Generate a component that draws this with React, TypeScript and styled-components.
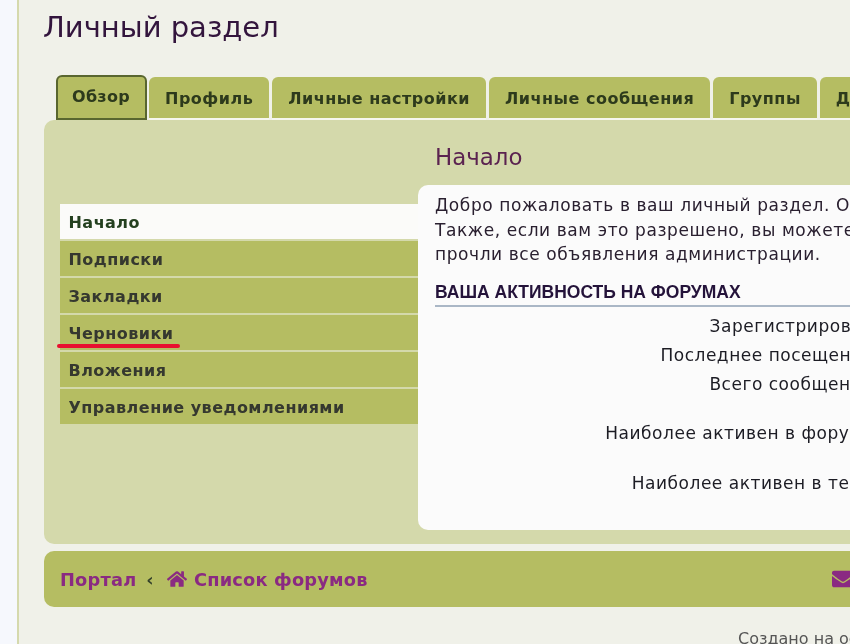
import React from 'react';
import styled, { createGlobalStyle } from 'styled-components';
import { FaHome, FaEnvelope } from 'react-icons/fa';

const tabs = ['Обзор', 'Профиль', 'Личные настройки', 'Личные сообщения', 'Группы', 'Друзья и недруги'];
const menu = ['Начало', 'Подписки', 'Закладки', 'Черновики', 'Вложения', 'Управление уведомлениями'];
const stats = [
  { label: 'Зарегистрирован:' },
  { label: 'Последнее посещение:' },
  { label: 'Всего сообщений:', tall: true },
  { label: 'Наиболее активен в форуме:', tall: true },
  { label: 'Наиболее активен в теме:' },
];

const App: React.FC = () => {
  return (
    <Page>
      <GlobalStyle />
      <Title>Личный раздел</Title>
      <Tabs>
        {tabs.map((tab, i) => (
          <Tab key={tab} $active={i === 0}>
            {tab}
          </Tab>
        ))}
      </Tabs>
      <Panel>
        <Sidebar>
          {menu.map((item, i) => (
            <MenuItem key={item} $active={i === 0}>
              {item}
            </MenuItem>
          ))}
          <RedMark />
        </Sidebar>
        <Main>
          <Heading>Начало</Heading>
          <Content>
            <Intro>
              Добро пожаловать в ваш личный раздел. Отсюда вы можете управлять своими настройками.
              <br />
              Также, если вам это разрешено, вы можете просматривать и изменять свой профиль, а также
              <br />
              прочли все объявления администрации.
            </Intro>
            <SectionTitle>ВАША АКТИВНОСТЬ НА ФОРУМАХ</SectionTitle>
            <Stats>
              {stats.map((row) => (
                <StatRow key={row.label} $tall={row.tall}>
                  {row.label}
                </StatRow>
              ))}
            </Stats>
          </Content>
        </Main>
      </Panel>
      <NavBar>
        <Crumbs>
          <span>Портал</span>
          <Separator>‹</Separator>
          <FaHome size={20} />
          <span>Список форумов</span>
        </Crumbs>
        <NavRight>
          <FaEnvelope size={22} />
          <span>Связаться с администрацией</span>
        </NavRight>
      </NavBar>
      <Footer>Создано на основе phpBB® Forum Software © phpBB Limited</Footer>
    </Page>
  );
};

export default App;

const GlobalStyle = createGlobalStyle`
  html, body {
    margin: 0;
    height: 644px;
    overflow: hidden;
    background: #f6f8fd;
  }
`;

const Page = styled.div`
  box-sizing: border-box;
  width: 1400px;
  height: 644px;
  margin-left: 17px;
  padding: 8px 0 0 25px;
  border-left: 2px solid #d5d9ad;
  background: #f0f1e9;
  font-family: 'DejaVu Sans', Verdana, sans-serif;
  filter: blur(0.5px);
  overflow: hidden;
`;

const Title = styled.h1`
  margin: 0 0 0 -1px;
  height: 38px;
  font-size: 29px;
  line-height: 38px;
  font-weight: 400;
  color: #33153d;
`;

const Tabs = styled.div`
  display: flex;
  align-items: flex-end;
  gap: 3px;
  height: 74px;
  margin-left: 12px;
`;

const Tab = styled.div<{ $active?: boolean }>`
  box-sizing: border-box;
  height: ${(p) => (p.$active ? '45px' : '43px')};
  padding: 0 ${(p) => (p.$active ? '14px' : '16px')};
  margin-right: ${(p) => (p.$active ? '-1px' : '0')};
  min-width: ${(p) => (p.$active ? '91px' : '0')};
  border-radius: 6px 6px 0 0;
  border: ${(p) => (p.$active ? '2px solid #59662f' : 'none')};
  border-bottom: ${(p) => (p.$active ? '2px solid #59662f' : '2px solid #f6f7ee')};
  background: #b5bd62;
  font-size: 16px;
  font-weight: 700;
  line-height: ${(p) => (p.$active ? '39px' : '43px')};
  letter-spacing: ${(p) => (p.$active ? '0.3px' : '0.5px')};
  white-space: nowrap;
  color: #2d3a1c;
`;

const Panel = styled.div`
  display: flex;
  height: 424px;
  padding-left: 16px;
  border-radius: 10px 0 0 10px;
  background: #d4d9ab;
`;

const Sidebar = styled.div`
  position: relative;
  flex: 0 0 358px;
  display: flex;
  flex-direction: column;
  gap: 2px;
  padding-top: 84px;
`;

const MenuItem = styled.div<{ $active?: boolean }>`
  height: 35px;
  padding-left: 8.5px;
  background: ${(p) => (p.$active ? '#fbfbf9' : '#b5bd62')};
  font-size: 16px;
  font-weight: 700;
  line-height: 37px;
  letter-spacing: 0.47px;
  color: ${(p) => (p.$active ? '#24401f' : '#35382f')};
`;

const RedMark = styled.span`
  position: absolute;
  left: -3px;
  top: 224px;
  width: 123px;
  height: 4px;
  border-radius: 2px;
  background: #e8102f;
`;

const Main = styled.div`
  flex: 1;
  display: flex;
  flex-direction: column;
`;

const Heading = styled.h2`
  margin: 0;
  height: 65px;
  padding-left: 17px;
  font-size: 22.9px;
  font-weight: 400;
  line-height: 74px;
  color: #5b2350;
`;

const Content = styled.div`
  box-sizing: border-box;
  height: 345px;
  padding: 8px 0 0 17px;
  border-radius: 10px 0 0 10px;
  background: #fbfbfb;
  color: #222;
`;

const Intro = styled.p`
  margin: 0;
  font-size: 17px;
  line-height: 24.5px;
  letter-spacing: 0.58px;
  white-space: nowrap;
  color: #2a2030;
`;

const SectionTitle = styled.h3`
  margin: 13px 0 0;
  padding-bottom: 1px;
  border-bottom: 2px solid #aab7c6;
  font-family: 'Liberation Sans', Arial, sans-serif;
  font-size: 17.5px;
  font-weight: 700;
  line-height: 24px;
  color: #24133a;
`;

const Stats = styled.div`
  display: flex;
  flex-direction: column;
  padding-top: 5px;
`;

const StatRow = styled.div<{ $tall?: boolean }>`
  width: 445px;
  height: 29px;
  margin-bottom: ${(p) => (p.$tall ? '20.5px' : '0')};
  font-size: 17px;
  line-height: 29px;
  letter-spacing: 0.52px;
  text-align: right;
  white-space: nowrap;
  color: #1c1c24;
`;

const NavBar = styled.div`
  display: flex;
  align-items: center;
  height: 56px;
  margin-top: 7px;
  padding-left: 16px;
  border-radius: 10px 0 0 10px;
  background: #b5bd62;
  font-size: 17.8px;
  font-weight: 700;
  letter-spacing: 0.2px;
  color: #8a2a82;
`;

const Crumbs = styled.div`
  flex: 0 0 772px;
  display: flex;
  align-items: center;
  gap: 7px;
`;

const Separator = styled.span`
  margin: 0 6px 0 3px;
  color: #33402a;
`;

const NavRight = styled.div`
  display: flex;
  align-items: center;
  gap: 7px;
`;

const Footer = styled.div`
  padding: 22px 0 0 694px;
  font-size: 16px;
  white-space: nowrap;
  color: #555;
`;
